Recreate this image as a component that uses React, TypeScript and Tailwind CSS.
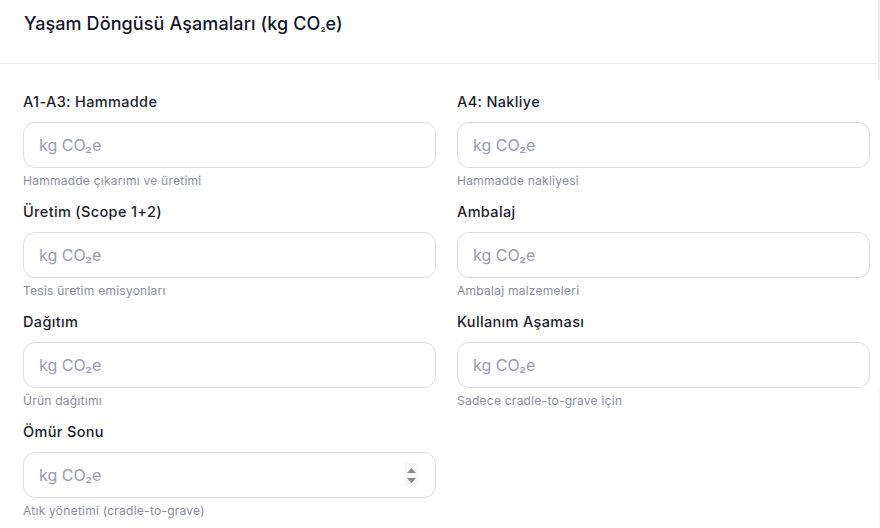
import React from "react";

const fields = [
  { label: "A1-A3: Hammadde", help: "Hammadde çıkarımı ve üretimi" },
  { label: "A4: Nakliye", help: "Hammadde nakliyesi" },
  { label: "Üretim (Scope 1+2)", help: "Tesis üretim emisyonları" },
  { label: "Ambalaj", help: "Ambalaj malzemeleri" },
  { label: "Dağıtım", help: "Ürün dağıtımı" },
  { label: "Kullanım Aşaması", help: "Sadece cradle-to-grave için" },
  { label: "Ömür Sonu", help: "Atık yönetimi (cradle-to-grave)", spinner: true },
];

export default function App() {
  return (
    <div
      className="flex w-[880px] h-[528px] overflow-hidden bg-white"
      style={{ fontFamily: "Inter, 'Noto Sans', sans-serif" }}
    >
      <div className="w-[878px] shrink-0 flex flex-col">
        <div className="h-[64px] border-b border-[#ececf0] pl-6 pt-[10px]">
          <h2 className="text-[18px] leading-[28px] font-medium text-[#15162b] tracking-[0.1px]">
            Yaşam Döngüsü Aşamaları (kg CO<span className="text-[11px]">₂</span>e)
          </h2>
        </div>
        <div className="pl-[23px] pt-[28px]">
          <div className="grid grid-cols-[413px_413px] gap-x-[21px] gap-y-[13px]">
            {fields.map((f) => (
              <div key={f.label} className="flex flex-col">
                <label className="text-[14.5px] leading-[20px] font-medium text-[#1c1d2e] tracking-[0.35px] mb-[10px]">
                  {f.label}
                </label>
                <div className="relative">
                  <input
                    placeholder="kg CO₂e"
                    className="w-full h-[46px] rounded-[12px] border border-[#dcdce6] bg-white px-[15px] text-[16px] text-[#1c1d2e] placeholder:text-[#9a9bb0] outline-none"
                  />
                  {f.spinner && (
                    <div className="absolute right-[18px] top-[11px] w-[13px] h-[24px] bg-[#f7f7f7] flex flex-col items-center justify-center gap-[5px]">
                      <svg width="9" height="5" viewBox="0 0 9 5">
                        <path d="M0 5 L4.5 0 L9 5 Z" fill="#8a8a8a" />
                      </svg>
                      <svg width="9" height="5" viewBox="0 0 9 5">
                        <path d="M0 0 L4.5 5 L9 0 Z" fill="#8a8a8a" />
                      </svg>
                    </div>
                  )}
                </div>
                <p className="mt-[5px] text-[12px] leading-[16px] text-[#8b8ca0] tracking-[0.25px]">{f.help}</p>
              </div>
            ))}
          </div>
        </div>
      </div>
      <div className="w-[2px] flex flex-col">
        <div className="h-[80px] bg-[#eeeeee]" />
        <div className="flex-1" />
        <div className="h-[140px] bg-[#f8f8f8]" />
      </div>
    </div>
  );
}
